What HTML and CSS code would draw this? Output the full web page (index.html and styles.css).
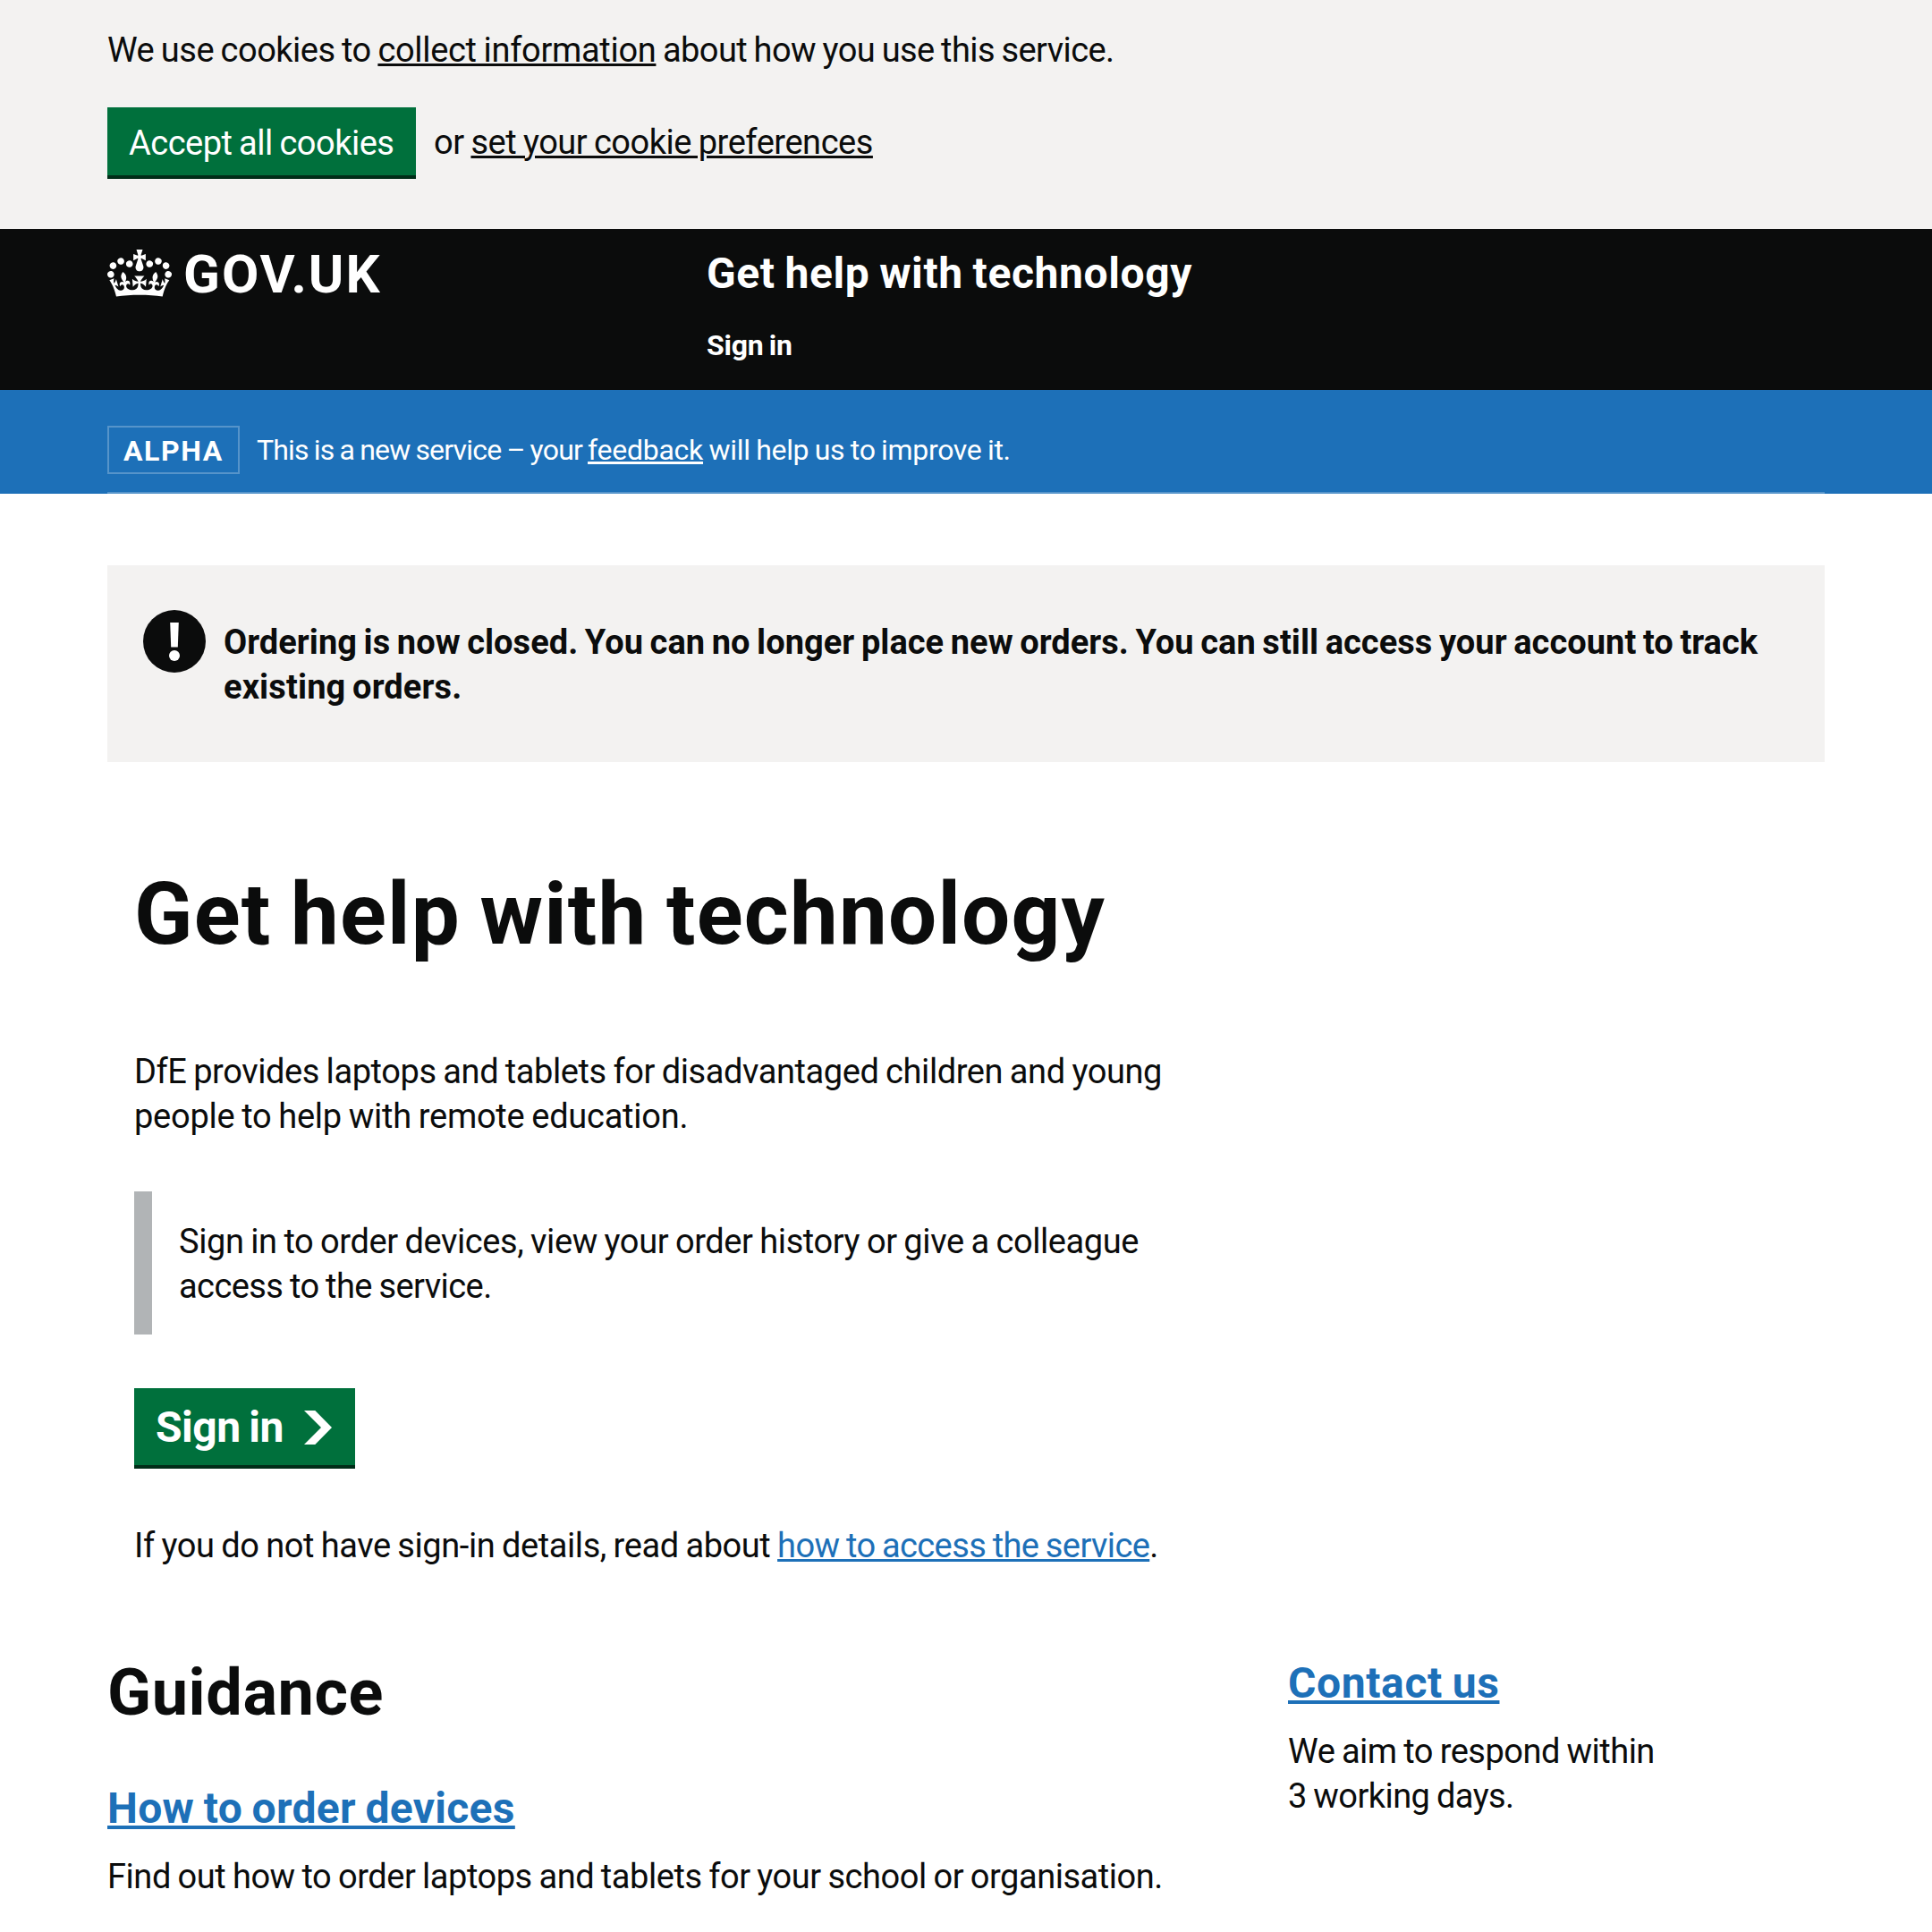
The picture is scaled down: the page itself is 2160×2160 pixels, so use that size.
FILE: index.html
```html
<!DOCTYPE html>
<html lang="en">
<head>
<meta charset="utf-8">
<title>Get help with technology - GOV.UK</title>
<link rel="stylesheet" href="styles.css">
</head>
<body>
<div class="cookie-banner">
  <div class="container">
    <p class="body-text"><span class="cookie-lead">We use cookies to </span><a class="link link-text collect" href="#">collect information</a><span class="cookie-tail"> about how you use this service.</span></p>
    <div class="cookie-actions">
      <button class="button accept" type="button">Accept all cookies</button>
      <p class="body-text cookie-or">or <a class="link link-text preferences" href="#">set your cookie preferences</a></p>
    </div>
  </div>
</div>

<header class="header">
  <div class="container header-grid">
    <a class="logo" href="#">
      <svg class="crown" viewBox="0 0 132 97" width="72" height="53" aria-hidden="true"><path fill="currentColor" fill-rule="evenodd" d="M25 30.2c3.5 1.5 7.7-.2 9.1-3.7 1.5-3.6-.2-7.8-3.9-9.2-3.6-1.4-7.6.3-9.1 3.9-1.4 3.5.3 7.5 3.9 9zM9 39.5c3.6 1.5 7.8-.2 9.2-3.7 1.5-3.6-.2-7.8-3.9-9.1-3.6-1.5-7.6.2-9.1 3.8-1.4 3.5.3 7.5 3.8 9zM4.4 57.2c3.5 1.5 7.7-.2 9.1-3.8 1.5-3.6-.2-7.7-3.9-9.1-3.5-1.5-7.6.3-9.1 3.8-1.4 3.5.3 7.6 3.9 9.1zm38.3-21.4c3.5 1.5 7.7-.2 9.1-3.8 1.5-3.6-.2-7.7-3.9-9.1-3.6-1.5-7.6.3-9.1 3.8-1.3 3.6.4 7.7 3.9 9.1zm64.4-5.6c-3.6 1.5-7.8-.2-9.1-3.7-1.5-3.6.2-7.8 3.8-9.2 3.6-1.4 7.7.3 9.2 3.9 1.3 3.5-.4 7.5-3.9 9zm15.9 9.3c-3.6 1.5-7.7-.2-9.1-3.7-1.5-3.6.2-7.8 3.7-9.1 3.6-1.5 7.7.2 9.2 3.8 1.5 3.5-.3 7.5-3.8 9zm4.7 17.7c-3.6 1.5-7.8-.2-9.2-3.8-1.5-3.6.2-7.7 3.9-9.1 3.6-1.5 7.7.3 9.2 3.8 1.3 3.5-.4 7.6-3.9 9.1zM89.3 35.8c-3.6 1.5-7.8-.2-9.2-3.8-1.4-3.6.2-7.7 3.9-9.1 3.6-1.5 7.7.3 9.2 3.8 1.4 3.6-.3 7.7-3.9 9.1zM69.7 17.7l8.9 4.7V9.3l-8.9 2.8c-.2-.3-.5-.6-.9-.9L72.4 0H59.6l3.5 11.2c-.3.3-.6.5-.9.9l-8.8-2.8v13.1l8.8-4.7c.3.3.6.7.9.9l-5 15.4v.1c-.2.8-.4 1.6-.4 2.4 0 4.1 3.1 7.5 7 8.1h.2c.3 0 .7.1 1 .1.4 0 .7 0 1-.1h.2c4-.6 7.1-4.1 7.1-8.1 0-.8-.1-1.7-.4-2.4V34l-5.1-15.4c.4-.2.7-.6 1-.9zM66 92.8c16.9 0 32.8 1.1 47.1 3.2 4-16.9 8.9-26.7 14-33.5l-9.6-3.4c1 4.9 1.1 7.2 0 10.2-1.5-1.4-3-4.3-4.2-8.7L108.6 76c2.8-2 5-3.2 7.5-3.3-4.4 9.4-10 11.9-13.6 11.2-4.3-.8-6.3-4.6-5.6-7.9 1-4.7 5.7-5.9 8-.5 4.3-8.7-3-11.4-7.6-8.8 7.1-7.2 7.9-13.5 2.1-21.1-8 6.1-8.1 12.3-4.5 20.8-4.7-5.4-12.1-2.5-9.5 6.2 3.4-5.2 7.9-2 7.2 3.1-.6 4.3-6.4 7.8-13.5 7.2-10.3-.9-10.9-8-11.2-13.8 2.5-.5 7.1 1.8 11 7.3L80.2 60c-4.1 4.4-8 5.3-12.3 5.4 1.4-4.4 8-11.6 8-11.6H55.5s6.4 7.2 7.9 11.6c-4.2-.1-8-1-12.3-5.4l1.4 16.4c3.9-5.5 8.5-7.7 10.9-7.3-.3 5.8-.9 12.8-11.1 13.8-7.2.6-12.9-2.9-13.5-7.2-.7-5 3.8-8.3 7.1-3.1 2.7-8.7-4.6-11.6-9.4-6.2 3.7-8.5 3.6-14.7-4.6-20.8-5.8 7.6-5 13.9 2.2 21.1-4.7-2.6-11.9.1-7.7 8.8 2.3-5.5 7.1-4.2 8.1.5.7 3.3-1.3 7.1-5.7 7.9-3.5.7-9-1.8-13.5-11.2 2.5.1 4.7 1.3 7.5 3.3l-4.7-15.4c-1.2 4.4-2.7 7.2-4.3 8.7-1.1-3-.9-5.3 0-10.2l-9.5 3.4c5 6.9 9.9 16.7 14 33.5 14.8-2.1 30.8-3.2 47.7-3.2z"/></svg>
      <span class="logo-text">GOV.UK</span>
    </a>
    <div class="header-content">
      <a class="service-name" href="#">Get help with technology</a>
      <a class="nav-link" href="#">Sign in</a>
    </div>
  </div>
</header>

<div class="phase-strip">
  <div class="container">
    <div class="phase-banner">
      <strong class="tag">ALPHA</strong>
      <p class="phase-text"><span class="phase-lead">This is a new service – your </span><a class="link link-inverse" href="#">feedback</a><span class="phase-tail"> will help us to improve it.</span></p>
    </div>
  </div>
</div>

<main class="container">
  <div class="notice">
    <span class="notice-icon" aria-hidden="true">
      <svg viewBox="0 0 70 70" width="70" height="70"><circle cx="35" cy="35" r="35" fill="#0b0c0c"/><path d="M30.2 14h9.600l-1 27.600h-7.600z" fill="#fff"/><circle cx="35" cy="51" r="6" fill="#fff"/></svg>
    </span>
    <strong class="notice-text">Ordering is now closed. You can no longer place new orders. You can still access your account to track<br><span class="notice-end">existing orders.</span></strong>
  </div>

  <section class="intro">
    <h1 class="heading-xl">Get help with technology</h1>
    <p class="body-text">DfE provides laptops and tablets for disadvantaged children and young<br><span class="intro-end">people to help with remote education.</span></p>
    <div class="inset"><p class="body-text"><span class="inset-lead">Sign in to order devices, view your order history or give a colleague</span><br><span class="inset-end">access to the service.</span></p></div>
    <a class="button start" href="#">Sign in
      <svg class="chevron" viewBox="0 0 31 38" width="31" height="38" aria-hidden="true"><path fill="currentColor" d="M0 0h12.300L31 19 12.300 38H0l19-19z"/></svg>
    </a>
    <p class="body-text details"><span class="details-lead">If you do not have sign-in details, read about </span><a class="link access" href="#">how to access the service</a>.</p>
  </section>

  <div class="columns">
    <section>
      <h2 class="heading-l">Guidance</h2>
      <h3 class="heading-m"><a class="link" href="#">How to order devices</a></h3>
      <p class="body-text find-out">Find out how to order laptops and tablets for your school or organisation.</p>
    </section>
    <aside>
      <h2 class="heading-m contact"><a class="link" href="#">Contact us</a></h2>
      <p class="body-text respond">We aim to respond within<br><span class="respond-end">3 working days.</span></p>
    </aside>
  </div>
</main>
</body>
</html>
```
FILE: styles.css
```css
* { box-sizing: border-box; }
html { overflow: hidden; }
body {
  margin: 0;
  background: #fff;
  color: #0b0c0c;
  font-family: Roboto, "Liberation Sans", sans-serif;
  font-size: 38px;
  line-height: 50px;
}
p, h1, h2, h3 { margin: 0; }
a { text-decoration: none; color: inherit; }
svg { display: block; }

.container { width: 1920px; margin: 0 auto; }

.body-text {
  margin-bottom: -1px;
  padding-top: 1px;
  font-size: 38px;
  line-height: 50px;
  letter-spacing: -.42px;
  word-spacing: -1.300px;
  white-space: nowrap;
}

.link {
  color: #1d70b8;
  text-decoration: underline;
  text-decoration-thickness: 3px;
  text-underline-offset: 2px;
}
.link-text { color: #0b0c0c; }
.link-inverse { color: #fff; }

.button {
  display: flex;
  border: 0;
  background: #00703c;
  box-shadow: 0 4px 0 #002d18;
  color: #fff;
  font-family: inherit;
  white-space: nowrap;
}

/* Cookie banner */
.cookie-banner { height: 256px; padding-top: 30px; background: #f3f2f1; }
.cookie-lead { letter-spacing: -.52px; }
.collect { letter-spacing: -.31px; }
.cookie-tail { letter-spacing: -.59px; }
.cookie-actions { display: flex; align-items: flex-start; gap: 20px; margin-top: 40px; }
.accept {
  width: 345px;
  height: 76px;
  padding: 15px 0 11px 24px;
  font-size: 38px;
  line-height: 50px;
  letter-spacing: -.5px;
  word-spacing: -1.300px;
}
.cookie-or { margin-top: 13px; }
.preferences { letter-spacing: -.46px; }

/* Header */
.header { height: 180px; padding-top: 20px; background: #0b0c0c; color: #fff; }
.header-grid { display: grid; grid-template-columns: 670px 1fr; }
.logo { display: flex; align-items: flex-start; gap: 13px; }
.crown { margin-top: 3px; }
.logo-text { font-size: 60px; font-weight: 700; line-height: 61px; letter-spacing: 2px; }
.header-content { display: flex; flex-direction: column; gap: 30px; font-weight: 700; }
.service-name { font-size: 48px; line-height: 60px; letter-spacing: .6px; word-spacing: -1.700px; }
.nav-link { font-size: 32px; line-height: 40px; letter-spacing: -.2px; word-spacing: -1.500px; }

/* Phase banner */
.phase-strip { background: #1d70b8; color: #fff; }
.phase-banner {
  display: flex;
  align-items: flex-start;
  gap: 19px;
  padding: 40px 0 20px;
  border-bottom: 2px solid #5694ca;
}
.tag {
  width: 148px;
  height: 54px;
  padding: 2px 0 0 16px;
  border: 2px solid #5694ca;
  font-size: 32px;
  line-height: 48px;
  letter-spacing: 1.600px;
}
.phase-text {
  margin-top: 7px;
  font-size: 32px;
  line-height: 40px;
  letter-spacing: -.26px;
  word-spacing: -1.100px;
  white-space: nowrap;
}
.phase-lead { letter-spacing: -.81px; }
.phase-tail { letter-spacing: -.32px; }

/* Closed notice */
.notice {
  display: flex;
  align-items: flex-start;
  gap: 20px;
  height: 220px;
  margin-top: 80px;
  padding: 50px 40px;
  background: #f3f2f1;
}
.notice-text {
  margin-top: 11px;
  letter-spacing: .04px;
  word-spacing: -1.900px;
  white-space: nowrap;
}
.notice-end { letter-spacing: .13px; }

/* Introduction */
.intro { margin-top: 120px; padding: 0 30px; }
.heading-xl {
  margin-bottom: 100px;
  font-size: 96px;
  font-weight: 700;
  line-height: 100px;
  letter-spacing: 1.200px;
  word-spacing: -3.400px;
}
.intro-end { letter-spacing: -.26px; }
.inset {
  margin: 60px 0;
  padding: 30px;
  border-left: 20px solid #b1b4b6;
}
.inset .body-text { height: 100px; margin-bottom: 0; }
.inset-lead { letter-spacing: -.4px; }
.inset-end { letter-spacing: -.57px; }
.start {
  justify-content: space-between;
  align-items: flex-start;
  width: 247px;
  height: 86px;
  padding: 14px 26px 12px 24px;
  font-size: 48px;
  font-weight: 700;
  line-height: 60px;
  letter-spacing: -.5px;
  word-spacing: -1.700px;
}
.chevron { margin-top: 11px; }
.details { margin-top: 64px; }
.details-lead { letter-spacing: -.42px; }
.access { letter-spacing: -.61px; }

/* Guidance and contact columns */
.columns { display: grid; grid-template-columns: 1320px 1fr; margin-top: 100px; }
.heading-l {
  padding-top: 3px;
  margin-bottom: 62px;
  font-size: 72px;
  font-weight: 700;
  line-height: 75px;
  letter-spacing: .6px;
}
.heading-m {
  margin-bottom: 20px;
  font-size: 48px;
  font-weight: 700;
  line-height: 60px;
  letter-spacing: .31px;
  word-spacing: -1.700px;
}
.heading-m .link { text-decoration-thickness: 4px; text-underline-offset: 3px; }
.contact { letter-spacing: .61px; }
.find-out { letter-spacing: -.45px; }
.respond { letter-spacing: -.5px; }
.respond-end { letter-spacing: -.56px; }
```
